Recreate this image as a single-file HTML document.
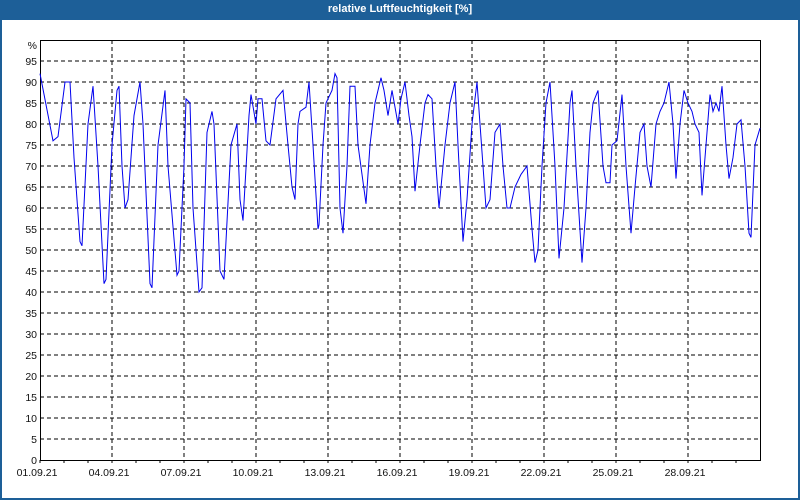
<!DOCTYPE html>
<html><head><meta charset="utf-8"><style>
html,body{margin:0;padding:0;width:800px;height:500px;overflow:hidden;background:#1d5f98;}
#c{position:absolute;left:2px;top:20px;width:796px;height:478px;background:#fff;}
#t{position:absolute;left:0;top:0;width:800px;height:20px;color:#fff;font:bold 11px "Liberation Sans",sans-serif;text-align:center;line-height:19px;}
svg{position:absolute;left:0;top:0}
text{font-family:"Liberation Sans",sans-serif;font-size:10.5px;fill:#111}
</style></head><body>
<div id="t">relative Luftfeuchtigkeit [%]</div>
<div id="c"></div>
<svg id="s" width="800" height="500"></svg>
<script>
var s=document.getElementById('s'),h='';
for(var v=5;v<100;v+=5){var y=460-4.2*v;h+='<line x1="40" x2="760" y1="'+y+'" y2="'+y+'" stroke="#000" stroke-dasharray="4,3"/>';}
for(var v=0;v<=95;v+=5){var y=460-4.2*v;h+='<text x="37" y="'+(y+4)+'" text-anchor="end">'+v+'</text>';}
h+='<text x="37" y="49" text-anchor="end">%</text>';
for(var d=3;d<30;d+=3){var x=40+24*d;h+='<line x1="'+x+'" x2="'+x+'" y1="40" y2="460" stroke="#000" stroke-dasharray="4,3"/>';}
for(var d=0;d<30;d++){var x=40+24*d;h+='<line x1="'+x+'" x2="'+x+'" y1="460" y2="463" stroke="#000"/>';}
for(var d=0;d<30;d+=3){var x=37+24*d;var dd=(d+1<10?'0':'')+(d+1);h+='<text x="'+x+'" y="476" text-anchor="middle">'+dd+'.09.21</text>';}
h+='<rect x="40.5" y="40.5" width="720" height="420" fill="none" stroke="#000"/>';
var p=[40,92,53,76,58,77,65,90,70,90,74,72,80,52,82,51,88,80,93,89,98,70,104,42,106,43,112,75,117,88,119,89,122,70,125,60,128,62,134,82,140,90,143,80,150,42,152,41,158,75,165,88,168,70,177,44,179,45,184,70,186,86,190,85,193,60,199,40,202,41,207,78,212,83,214,80,220,45,224,43,231,75,237,80,240,62,243,57,249,82,251,87,256,80,258,86,262,86,266,76,270,75,276,86,283,88,288,75,292,65,295,62,298,80,300,83,306,84,309,90,313,75,318,55,319,56,323,75,326,85,332,88,335,92,337,91,340,60,343,54,347,70,350,89,355,89,358,75,366,61,370,75,375,85,381,91,384,88,388,82,392,88,395,84,398,80,401,86,405,90,409,82,412,77,415,64,420,75,425,85,428,87,432,86,436,70,439,60,445,75,450,85,455,90,458,75,463,52,467,62,472,80,477,90,480,80,486,60,490,62,495,78,500,80,503,70,507,60,510,60,515,65,521,68,527,70,532,55,535,47,538,50,542,70,546,85,550,90,555,70,559,48,564,60,570,85,572,88,576,70,582,47,586,60,590,78,593,85,598,88,603,70,606,66,610,66,612,75,617,76,622,87,626,70,631,54,635,65,640,78,644,80,647,70,651,65,656,80,660,83,664,85,669,90,673,80,676,67,680,80,684,88,688,85,692,83,695,80,699,78,702,63,706,75,710,87,713,83,716,85,719,83,722,89,726,75,729,67,733,72,737,80,741,81,745,70,749,54,751,53,755,75,760,79];
var pts='';for(var i=0;i<p.length;i+=2)pts+=p[i]+','+(460-4.2*p[i+1]).toFixed(1)+' ';
h+='<polyline points="'+pts+'" fill="none" stroke="#0000ee" stroke-width="1"/>';
s.innerHTML=h;
</script>
</body></html>
